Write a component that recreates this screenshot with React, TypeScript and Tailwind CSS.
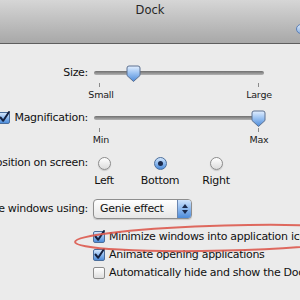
import React from "react";

const font = "font-['DejaVu_Sans',sans-serif]";

function Knob({ left }: { left: number }) {
  return (
    <svg
      className="absolute top-[1px]"
      style={{ left }}
      width="15"
      height="18"
      viewBox="0 0 15 18"
    >
      <defs>
        <linearGradient id={`kg${left}`} x1="0" y1="0" x2="0" y2="1">
          <stop offset="0" stopColor="#e3efff" />
          <stop offset="0.45" stopColor="#9cc3f2" />
          <stop offset="1" stopColor="#4d8ad8" />
        </linearGradient>
      </defs>
      <path
        d="M3 1 H12 Q14 1 14 3 V10.5 L7.5 16.5 L1 10.5 V3 Q1 1 3 1 Z"
        fill={`url(#kg${left})`}
        stroke="#5d7190"
        strokeWidth="1"
      />
    </svg>
  );
}

function Slider({
  knob,
  minLabel,
  maxLabel,
}: {
  knob: number;
  minLabel: string;
  maxLabel: string;
}) {
  return (
    <div className="ml-[5px] w-[187px] flex flex-col">
      <div className="relative h-[18px]">
        <div className="absolute left-[1px] right-[16px] top-[7px] h-[4px] rounded-full bg-gradient-to-b from-[#6f6f6f] to-[#b4b4b4]" />
        <Knob left={knob} />
      </div>
      <div className="flex h-[4px] mt-[1px]">
        <div className="ml-[6px] w-px h-[4px] bg-[#8a8a8a]" />
        <div className="ml-[158px] w-px h-[4px] bg-[#8a8a8a]" />
      </div>
      <div className="flex mt-[2px] text-[9.5px] leading-[11px] tracking-[-0.2px] text-[#1a1a1a]">
        <span className="-ml-[7px] w-[30px] text-center">{minLabel}</span>
        <span className="ml-[128px] w-[30px] text-center">{maxLabel}</span>
      </div>
    </div>
  );
}

function CheckBox({ checked }: { checked: boolean }) {
  if (!checked) {
    return (
      <div className="w-[12px] h-[12px] shrink-0 rounded-[2px] border border-[#8c8c8c] bg-gradient-to-b from-[#ffffff] to-[#dedede]" />
    );
  }
  return (
    <div className="relative w-[12px] h-[12px] shrink-0 rounded-[2px] border border-[#4b6e9c] bg-gradient-to-b from-[#d2e6fc] via-[#8db9ee] to-[#4c8cda]">
      <svg
        className="absolute -left-[1px] -top-[2px] overflow-visible"
        width="13"
        height="13"
        viewBox="0 0 13 13"
      >
        <path
          d="M2.5 6.5 L5.2 9.8 L11 1"
          fill="none"
          stroke="#14213f"
          strokeWidth="2"
          strokeLinecap="round"
          strokeLinejoin="round"
        />
      </svg>
    </div>
  );
}

function Radio({ selected }: { selected: boolean }) {
  if (selected) {
    return (
      <div className="w-[13px] h-[13px] rounded-full border border-[#4b6e9c] bg-gradient-to-b from-[#d2e6fc] via-[#8db9ee] to-[#4c8cda] flex items-center justify-center">
        <div className="w-[5px] h-[5px] rounded-full bg-[#1b2a4c]" />
      </div>
    );
  }
  return (
    <div className="w-[13px] h-[13px] rounded-full border border-[#8c8c8c] bg-gradient-to-b from-[#ffffff] to-[#dcdcdc] shadow-[0_1px_1px_rgba(0,0,0,0.15)]" />
  );
}

function Label({ children }: { children: React.ReactNode }) {
  return (
    <div className="w-[88px] h-[18px] shrink-0 flex items-center justify-end whitespace-nowrap">
      {children}
    </div>
  );
}

export default function App() {
  return (
    <div
      className={`relative w-[300px] h-[300px] overflow-hidden bg-[#ebebeb] ${font} text-[11px] tracking-[-0.3px] text-[#111]`}
    >
      {/* title bar */}
      <div className="relative h-[44px] border-b border-[#5e5e5e] bg-gradient-to-b from-[#d6d6d6] to-[#a8a8a8] flex justify-center">
        <div className="pt-[3px] text-[11.5px] leading-[14px] text-[#262626] tracking-[0px]">
          Dock
        </div>
        <div className="absolute left-[296px] top-[24px] w-[20px] h-[10px] rounded-full border border-[#5a7fb8] bg-gradient-to-b from-[#d8e6f8] to-[#8fb2e0]" />
      </div>

      {/* body */}
      <div className="flex flex-col pt-[20px]">
        {/* Size */}
        <div className="flex items-start">
          <Label>Size:</Label>
          <Slider knob={33} minLabel="Small" maxLabel="Large" />
        </div>

        {/* Magnification */}
        <div className="flex items-start mt-[9px]">
          <Label>
            <div className="flex items-center gap-[4px]">
              <CheckBox checked />
              <span>Magnification:</span>
            </div>
          </Label>
          <Slider knob={158} minLabel="Min" maxLabel="Max" />
        </div>

        {/* Position */}
        <div className="flex items-start mt-[9px]">
          <Label>Position on screen:</Label>
          <div className="flex -ml-[4px] gap-[16px]">
            {[
              ["Left", false],
              ["Bottom", true],
              ["Right", false],
            ].map(([t, s]) => (
              <div key={t as string} className="w-[40px] flex flex-col items-center">
                <div className="h-[18px] flex items-center">
                  <Radio selected={s as boolean} />
                </div>
                <div className="mt-[2px] leading-[13px] whitespace-nowrap">{t as string}</div>
              </div>
            ))}
          </div>
        </div>

        {/* Minimize using */}
        <div className="flex items-center mt-[12px]">
          <Label>Minimize windows using:</Label>
          <div className="ml-[5px] w-[99px] h-[20px] flex rounded-[4px] border border-[#8e8e8e] bg-gradient-to-b from-[#ffffff] to-[#e6e6e6] shadow-[0_1px_1px_rgba(0,0,0,0.15)] overflow-hidden">
            <div className="flex-1 flex items-center pl-[6px] whitespace-nowrap">Genie effect</div>
            <div className="w-[14px] flex flex-col items-center justify-center gap-[2px] bg-gradient-to-b from-[#cfe3fb] via-[#8cb8ee] to-[#4c8bd9] border-l border-[#6a86b0]">
              <svg width="6" height="4" viewBox="0 0 6 4">
                <path d="M3 0 L6 4 H0 Z" fill="#1b2a4c" />
              </svg>
              <svg width="6" height="4" viewBox="0 0 6 4">
                <path d="M0 0 H6 L3 4 Z" fill="#1b2a4c" />
              </svg>
            </div>
          </div>
        </div>

        {/* checkboxes */}
        <div className="flex flex-col mt-[9px] ml-[93px]">
          {[
            ["Minimize windows into application icon", true],
            ["Animate opening applications", true],
            ["Automatically hide and show the Dock", false],
          ].map(([t, c]) => (
            <div key={t as string} className="h-[18px] flex items-center gap-[4px] whitespace-nowrap">
              <CheckBox checked={c as boolean} />
              <span>{t as string}</span>
            </div>
          ))}
        </div>
      </div>

      {/* red annotation ellipse */}
      <svg
        className="absolute left-0 top-0 pointer-events-none"
        width="300"
        height="300"
        viewBox="0 0 300 300"
      >
        <ellipse
          cx="225"
          cy="238"
          rx="150"
          ry="12.5"
          transform="rotate(-1.5 225 238)"
          fill="none"
          stroke="#dd5a4f"
          strokeOpacity="0.9"
          strokeWidth="2"
        />
      </svg>
    </div>
  );
}
